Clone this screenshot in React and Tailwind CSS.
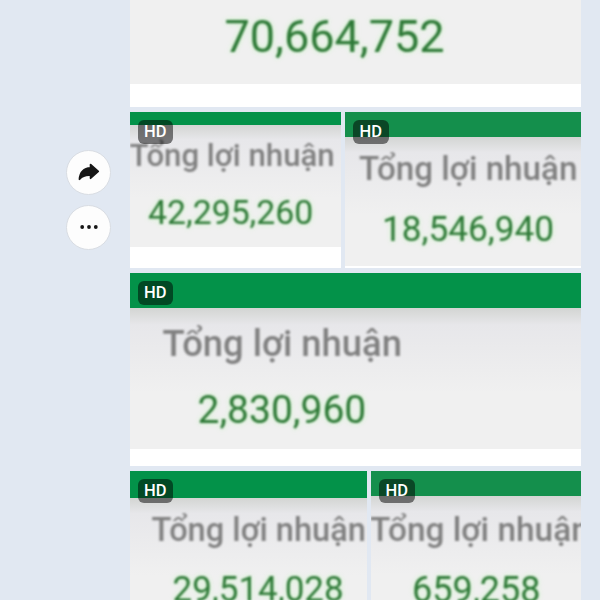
import clsx from "clsx";

const LABEL = "Tổng lợi nhuận";

function HdBadge() {
  return (
    <span className="absolute left-2 top-2 flex h-[23.5px] w-[35.5px] items-center justify-center rounded-[6px] bg-black/50 pt-px text-[16.5px] font-medium leading-none text-white">
      HD
    </span>
  );
}

function Tile({ className, bar, body, label, labelClass, value, valueClass }) {
  return (
    <div className={clsx("relative flex shrink-0 flex-col overflow-hidden bg-white", className)}>
      {bar && <div className={clsx("w-full shrink-0", bar)} />}
      <div
        className={clsx(
          "flex w-full shrink-0 flex-col items-start whitespace-nowrap",
          body
        )}
      >
        {label && (
          <p className={clsx("font-medium leading-none text-[#808080] blur-[0.8px]", labelClass)}>
            {label}
          </p>
        )}
        <p
          className={clsx(
            "leading-none text-[#2f7a38] blur-[0.8px] [text-shadow:0_0_5px_#c4f5be]",
            valueClass
          )}
        >
          {value}
        </p>
      </div>
      {label && <HdBadge />}
    </div>
  );
}

function RoundButton({ title, children }) {
  return (
    <button
      type="button"
      aria-label={title}
      className="flex size-[45px] items-center justify-center rounded-full border border-[#d9dde3] bg-[#fdfdfd] text-[#161616]"
    >
      {children}
    </button>
  );
}

const shade = "bg-linear-to-b from-[#d3d5d3] from-0% via-[#e7e7ea] via-12% to-[#f0f0f0] to-60%";

export default function App() {
  return (
    <div className="flex h-[600px] w-[600px] overflow-hidden bg-[#e1e8f2] font-['Roboto',sans-serif]">
      <div className="flex w-[129.5px] shrink-0 flex-col items-end gap-[10px] pr-[18.5px] pt-[149.5px]">
        <RoundButton title="Share">
          <svg width="22" height="18" viewBox="0 0 22 18" fill="currentColor">
            <path
              d="M12.6 1.6 20.2 8.4 12.6 15.2V12.2C8 11.8 4.5 12.8 1.5 16.2 2 9.5 6 5.2 12.6 4.8Z"
              stroke="currentColor"
              strokeWidth="1.8"
              strokeLinejoin="round"
            />
          </svg>
        </RoundButton>
        <RoundButton title="More">
          <svg width="20" height="6" viewBox="0 0 20 6" fill="currentColor">
            <circle cx="3.2" cy="3" r="1.9" />
            <circle cx="10" cy="3" r="1.9" />
            <circle cx="16.8" cy="3" r="1.9" />
          </svg>
        </RoundButton>
      </div>

      <div className="flex w-[451.5px] shrink-0 flex-col gap-[5px]">
        <Tile
          className="h-[107px]"
          body="h-[84px] bg-[#f0f0f0]"
          value="70,664,752"
          valueClass="ml-[95px] mt-[14px] text-[45px]"
        />

        <div className="flex h-[156px] shrink-0 gap-1">
          <Tile
            className="w-[211.5px]"
            bar="h-[13px] bg-[#039249]"
            body={clsx("h-[122px]", shade)}
            label={LABEL}
            labelClass="mt-[15px] text-[31.2px]"
            value="42,295,260"
            valueClass="ml-[18.5px] mt-[24.5px] text-[33.8px]"
          />
          <Tile
            className="w-[236px]"
            bar="h-[24.5px] bg-[#148f4c]"
            body={clsx("h-[129.5px]", shade)}
            label={LABEL}
            labelClass="ml-[14px] mt-[15.5px] text-[33.2px]"
            value="18,546,940"
            valueClass="ml-[37px] mt-[26.5px] text-[35.2px]"
          />
        </div>

        <Tile
          className="h-[193px]"
          bar="h-[35px] bg-[#039249]"
          body={clsx("h-[141px]", shade)}
          label={LABEL}
          labelClass="ml-[33px] mt-[17.5px] text-[36.4px]"
          value="2,830,960"
          valueClass="ml-[68px] mt-[29px] text-[39px]"
        />

        <div className="flex h-[156px] shrink-0 gap-1">
          <Tile
            className="w-[237.5px]"
            bar="h-[26.5px] bg-[#039249]"
            body={clsx("h-[129.5px]", shade)}
            label={LABEL}
            labelClass="ml-[22px] mt-[16px] text-[32.6px]"
            value="29,514,028"
            valueClass="ml-[43px] mt-[26px] text-[35px]"
          />
          <Tile
            className="w-[210px]"
            bar="h-[25px] bg-[#148f4c]"
            body={clsx("h-[131px]", shade)}
            label={LABEL}
            labelClass="-ml-[1px] mt-[17px] text-[33.4px]"
            value="659,258"
            valueClass="ml-[41px] mt-[26px] text-[36px]"
          />
        </div>
      </div>
    </div>
  );
}
